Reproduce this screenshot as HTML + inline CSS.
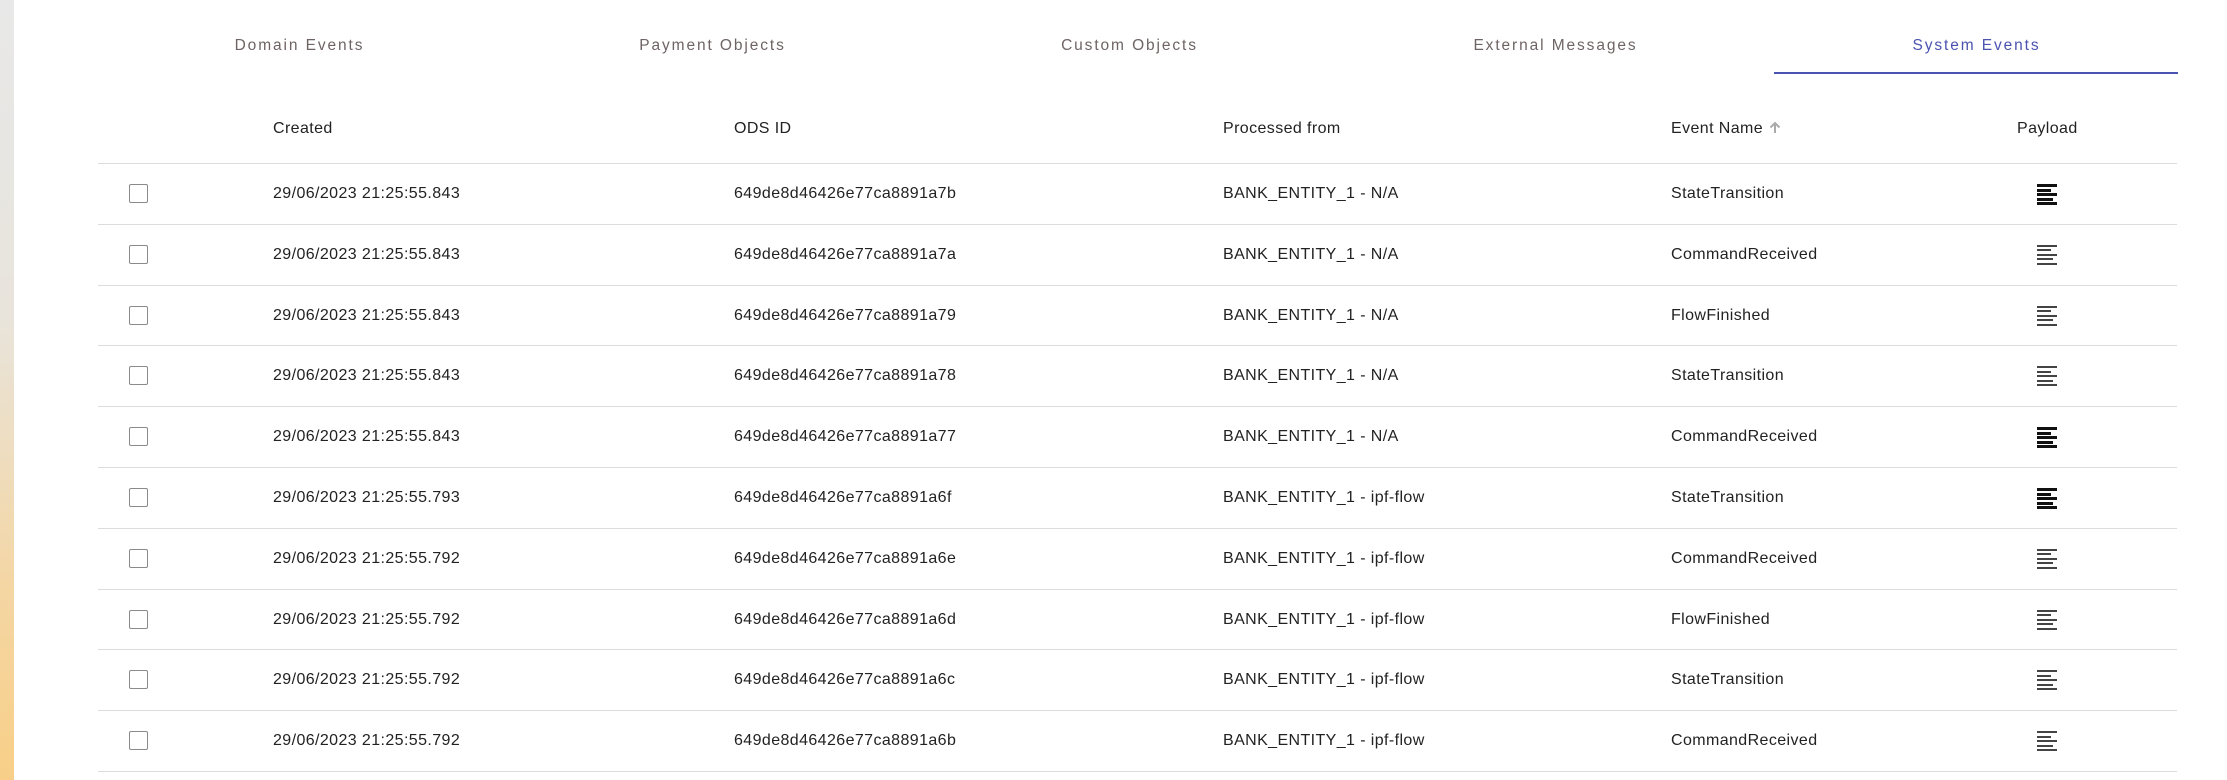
<!DOCTYPE html>
<html><head><style>
body{margin:0;width:2227px;height:780px;background:#fff;font-family:"Liberation Sans",sans-serif;position:relative;overflow:hidden}
.strip{position:absolute;left:0;top:0;width:14px;height:780px;background:linear-gradient(#e8e8e8 0%,#e8e4dc 40%,#f4d6a4 75%,#f8cf88 100%)}
.tab{position:absolute;top:37px;width:419px;text-align:center;font-size:15.5px;letter-spacing:1.9px;color:#6e6464}
.ul{position:absolute;left:1774px;top:72px;width:404px;height:2px;background:#4a53b0}
.t{position:absolute;font-size:16px;letter-spacing:0.4px;color:#222;white-space:nowrap;line-height:18px}
.line{position:absolute;left:98px;width:2079px;height:1px;background:#dcdcdc}
.cb{position:absolute;left:129px;width:19px;height:19px;border:1.5px solid #8a8a8a;border-radius:2px;box-sizing:border-box}
.ic{position:absolute;left:2037px;width:20px}
.ic i{display:block;height:2px;background:#333;margin-bottom:3px}
</style></head><body>
<div class="strip"></div>
<div class="tab" style="left:90px">Domain Events</div>
<div class="tab" style="left:503px">Payment Objects</div>
<div class="tab" style="left:920px">Custom Objects</div>
<div class="tab" style="left:1346px">External Messages</div>
<div class="tab" style="left:1767px;color:#4a53b0">System Events</div>
<div class="ul"></div>
<div class="t" style="left:273px;top:120px">Created</div>
<div class="t" style="left:734px;top:120px">ODS ID</div>
<div class="t" style="left:1223px;top:120px">Processed from</div>
<div class="t" style="left:1671px;top:120px">Event Name <svg width="14" height="14" viewBox="0 0 14 14" style="vertical-align:-1px"><path d="M7 13V3M2.5 7.5L7 3l4.5 4.5" stroke="#aaa" stroke-width="2" fill="none"/></svg></div>
<div class="t" style="left:2017px;top:120px">Payload</div>
<div class="line" style="top:163px"></div>
<div id="rows"></div>
<script>
var d=[["843","7b","N/A","StateTransition",1],["843","7a","N/A","CommandReceived",0],["843","79","N/A","FlowFinished",0],["843","78","N/A","StateTransition",0],["843","77","N/A","CommandReceived",1],["793","6f","ipf-flow","StateTransition",1],["792","6e","ipf-flow","CommandReceived",0],["792","6d","ipf-flow","FlowFinished",0],["792","6c","ipf-flow","StateTransition",0],["792","6b","ipf-flow","CommandReceived",0]];
var h="";
d.forEach(function(r,i){var top=163+i*60.8;var ty=top+22;
h+='<div class="cb" style="top:'+(top+21)+'px"></div>';
h+='<div class="t" style="left:273px;top:'+ty+'px">29/06/2023 21:25:55.'+r[0]+'</div>';
h+='<div class="t" style="left:734px;top:'+ty+'px">649de8d46426e77ca8891a'+r[1]+'</div>';
h+='<div class="t" style="left:1223px;top:'+ty+'px">BANK_ENTITY_1 - '+r[2]+'</div>';
h+='<div class="t" style="left:1671px;top:'+ty+'px">'+r[3]+'</div>';
var c=r[4]?'#111':'#444',w=r[4]?'3px':'2px',m=r[4]?'1.5px':'2.5px';
h+='<div class="ic" style="top:'+(top+21)+'px">';
[20,14,20,16,20].forEach(function(x){h+='<i style="width:'+x+'px;background:'+c+';height:'+w+';margin-bottom:'+m+'"></i>'});
h+='</div>';
h+='<div class="line" style="top:'+(top+60.8)+'px"></div>';});
document.getElementById("rows").innerHTML=h;
</script>
</body></html>
